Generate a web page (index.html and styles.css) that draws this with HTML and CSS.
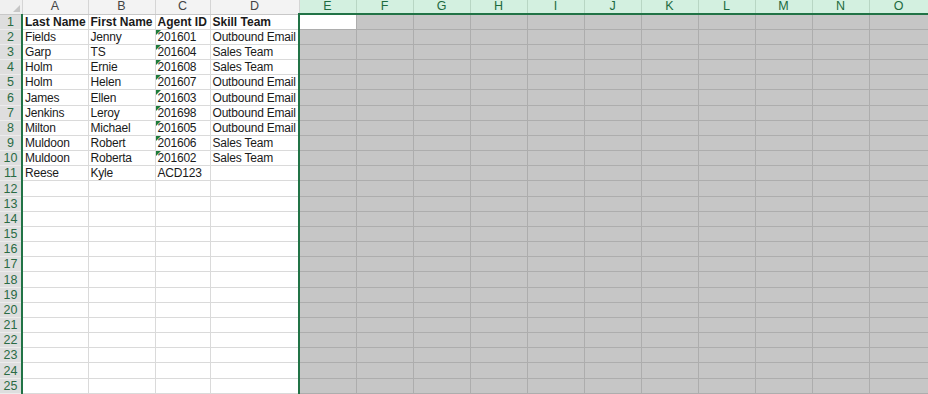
FILE: index.html
```html
<!DOCTYPE html>
<html lang="en">
  <head>
    <meta charset="UTF-8" />
    <title>Agents</title>
    <link rel="stylesheet" href="styles.css">
  </head>

  <body>
    <table class="sheet">
      <colgroup>
        <col class="col-hd" />
        <col class="col-a" />
        <col class="col-b" />
        <col class="col-c" />
        <col class="col-d" />
        <col class="col-x" span="10" />
        <col class="col-o" />
      </colgroup>
      <thead>
        <tr>
          <th class="corner"><span class="all"></span></th>
          <th>A</th><th>B</th><th>C</th><th>D</th>
          <th class="sel">E</th><th class="sel">F</th><th class="sel">G</th><th class="sel">H</th>
          <th class="sel">I</th><th class="sel">J</th><th class="sel">K</th><th class="sel">L</th>
          <th class="sel">M</th><th class="sel">N</th><th class="sel">O</th>
        </tr>
      </thead>
      <tbody>
        <tr><th>1</th><td class="bold">Last Name</td><td class="bold">First Name</td><td class="bold">Agent ID</td><td class="bold">Skill Team</td><td class="active"></td><td></td><td></td><td></td><td></td><td></td><td></td><td></td><td></td><td></td><td></td></tr>
        <tr><th>2</th><td>Fields</td><td>Jenny</td><td class="txtnum">201601</td><td>Outbound Email</td><td></td><td></td><td></td><td></td><td></td><td></td><td></td><td></td><td></td><td></td><td></td></tr>
        <tr><th>3</th><td>Garp</td><td>TS</td><td class="txtnum">201604</td><td>Sales Team</td><td></td><td></td><td></td><td></td><td></td><td></td><td></td><td></td><td></td><td></td><td></td></tr>
        <tr><th>4</th><td>Holm</td><td>Ernie</td><td class="txtnum">201608</td><td>Sales Team</td><td></td><td></td><td></td><td></td><td></td><td></td><td></td><td></td><td></td><td></td><td></td></tr>
        <tr><th>5</th><td>Holm</td><td>Helen</td><td class="txtnum">201607</td><td>Outbound Email</td><td></td><td></td><td></td><td></td><td></td><td></td><td></td><td></td><td></td><td></td><td></td></tr>
        <tr><th>6</th><td>James</td><td>Ellen</td><td class="txtnum">201603</td><td>Outbound Email</td><td></td><td></td><td></td><td></td><td></td><td></td><td></td><td></td><td></td><td></td><td></td></tr>
        <tr><th>7</th><td>Jenkins</td><td>Leroy</td><td class="txtnum">201698</td><td>Outbound Email</td><td></td><td></td><td></td><td></td><td></td><td></td><td></td><td></td><td></td><td></td><td></td></tr>
        <tr><th>8</th><td>Milton</td><td>Michael</td><td class="txtnum">201605</td><td>Outbound Email</td><td></td><td></td><td></td><td></td><td></td><td></td><td></td><td></td><td></td><td></td><td></td></tr>
        <tr><th>9</th><td>Muldoon</td><td>Robert</td><td class="txtnum">201606</td><td>Sales Team</td><td></td><td></td><td></td><td></td><td></td><td></td><td></td><td></td><td></td><td></td><td></td></tr>
        <tr><th>10</th><td>Muldoon</td><td>Roberta</td><td class="txtnum">201602</td><td>Sales Team</td><td></td><td></td><td></td><td></td><td></td><td></td><td></td><td></td><td></td><td></td><td></td></tr>
        <tr><th>11</th><td>Reese</td><td>Kyle</td><td>ACD123</td><td></td><td></td><td></td><td></td><td></td><td></td><td></td><td></td><td></td><td></td><td></td><td></td></tr>
        <tr><th>12</th><td></td><td></td><td></td><td></td><td></td><td></td><td></td><td></td><td></td><td></td><td></td><td></td><td></td><td></td><td></td></tr>
        <tr><th>13</th><td></td><td></td><td></td><td></td><td></td><td></td><td></td><td></td><td></td><td></td><td></td><td></td><td></td><td></td><td></td></tr>
        <tr><th>14</th><td></td><td></td><td></td><td></td><td></td><td></td><td></td><td></td><td></td><td></td><td></td><td></td><td></td><td></td><td></td></tr>
        <tr><th>15</th><td></td><td></td><td></td><td></td><td></td><td></td><td></td><td></td><td></td><td></td><td></td><td></td><td></td><td></td><td></td></tr>
        <tr><th>16</th><td></td><td></td><td></td><td></td><td></td><td></td><td></td><td></td><td></td><td></td><td></td><td></td><td></td><td></td><td></td></tr>
        <tr><th>17</th><td></td><td></td><td></td><td></td><td></td><td></td><td></td><td></td><td></td><td></td><td></td><td></td><td></td><td></td><td></td></tr>
        <tr><th>18</th><td></td><td></td><td></td><td></td><td></td><td></td><td></td><td></td><td></td><td></td><td></td><td></td><td></td><td></td><td></td></tr>
        <tr><th>19</th><td></td><td></td><td></td><td></td><td></td><td></td><td></td><td></td><td></td><td></td><td></td><td></td><td></td><td></td><td></td></tr>
        <tr><th>20</th><td></td><td></td><td></td><td></td><td></td><td></td><td></td><td></td><td></td><td></td><td></td><td></td><td></td><td></td><td></td></tr>
        <tr><th>21</th><td></td><td></td><td></td><td></td><td></td><td></td><td></td><td></td><td></td><td></td><td></td><td></td><td></td><td></td><td></td></tr>
        <tr><th>22</th><td></td><td></td><td></td><td></td><td></td><td></td><td></td><td></td><td></td><td></td><td></td><td></td><td></td><td></td><td></td></tr>
        <tr><th>23</th><td></td><td></td><td></td><td></td><td></td><td></td><td></td><td></td><td></td><td></td><td></td><td></td><td></td><td></td><td></td></tr>
        <tr><th>24</th><td></td><td></td><td></td><td></td><td></td><td></td><td></td><td></td><td></td><td></td><td></td><td></td><td></td><td></td><td></td></tr>
        <tr><th>25</th><td></td><td></td><td></td><td></td><td></td><td></td><td></td><td></td><td></td><td></td><td></td><td></td><td></td><td></td><td></td></tr>
      </tbody>
    </table>
  </body>
</html>
```

FILE: styles.css
```css
* {
  padding: 0;
  margin: 0;
  box-sizing: border-box;
}

html,
body {
  height: 100vh;
  background: #fff;
  overflow: hidden;
}

.sheet {
  table-layout: fixed;
  border-collapse: collapse;
  width: 928px;
  font-family: "Liberation Sans", Arial, sans-serif;
  font-size: 12px;
  color: #1a1a1a;
}

.col-hd { width: 22px; }
.col-a { width: 66px; }
.col-b { width: 67px; }
.col-c { width: 55px; }
.col-d { width: 89px; }
.col-x { width: 57px; }
.col-o { width: 59px; }

/* column headers */
.sheet thead tr {
  height: 14px;
}

.sheet thead th {
  font-weight: normal;
  font-size: 12.5px;
  line-height: 13px;
  color: #444;
  background: #f3f3f3;
  border-right: 1px solid #d5d5d5;
  border-bottom: 1px solid #c8c8c8;
  text-align: center;
  vertical-align: middle;
}

.sheet thead th.sel {
  background: #d3f0e0;
  color: #1d6b3f;
  border-right-color: #b8d6c4;
  border-bottom: 2px solid #217346;
}

.sheet thead th.corner {
  position: relative;
  background: #f0f0f0;
}

.all {
  position: absolute;
  right: 2px;
  bottom: 2px;
  width: 0;
  height: 0;
  border-left: 7px solid transparent;
  border-bottom: 7px solid #c6c6c6;
}

/* rows */
.sheet tbody tr {
  height: 15.18px;
}

.sheet tbody th {
  font-weight: normal;
  font-size: 12.5px;
  line-height: 13px;
  color: #2a6b44;
  background: #dedede;
  border-bottom: 1px solid #ececec;
  border-right: 2px solid #217346;
  text-align: center;
  vertical-align: bottom;
}

.sheet td {
  position: relative;
  padding: 0 0 0 2px;
  line-height: 13px;
  letter-spacing: -0.2px;
  white-space: nowrap;
  overflow: hidden;
  vertical-align: bottom;
  border-right: 1px solid #dadada;
  border-bottom: 1px solid #dadada;
}

.sheet td.bold {
  font-weight: bold;
  letter-spacing: 0;
}

.sheet td.txtnum::before {
  content: "";
  position: absolute;
  top: 0;
  left: 0;
  width: 0;
  height: 0;
  border-top: 5px solid #1e7b3a;
  border-right: 5px solid transparent;
}

/* selected block E:O */
.sheet tbody td:nth-child(n+6) {
  background: #c6c6c6;
  border-right-color: #adadad;
  border-bottom-color: #adadad;
}

.sheet tbody td:nth-child(6) {
  border-left: 2px solid #217346;
}

.sheet tbody td.active {
  background: #fff;
}
```
